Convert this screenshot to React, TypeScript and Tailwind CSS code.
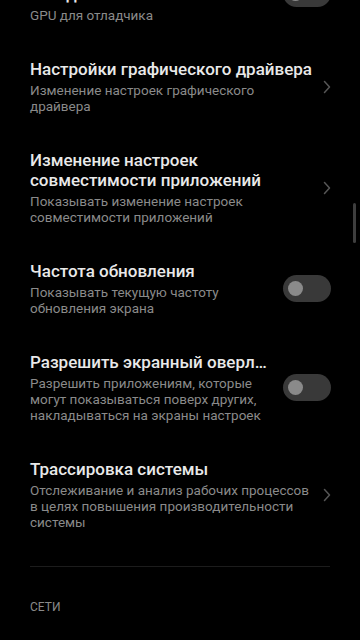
import type { ReactNode } from "react";

type Row = {
  title: string;
  summary: string;
  control: "toggle" | "chevron";
};

const rows: Row[] = [
  {
    title: "Разрешить загрузку слоев отладки",
    summary: "GPU для отладчика",
    control: "toggle",
  },
  {
    title: "Настройки графического драйвера",
    summary: "Изменение настроек графического драйвера",
    control: "chevron",
  },
  {
    title: "Изменение настроек совместимости приложений",
    summary: "Показывать изменение настроек совместимости приложений",
    control: "chevron",
  },
  {
    title: "Частота обновления",
    summary: "Показывать текущую частоту обновления экрана",
    control: "toggle",
  },
  {
    title: "Разрешить экранный оверлей настроек",
    summary:
      "Разрешить приложениям, которые могут показываться поверх других, накладываться на экраны настроек",
    control: "toggle",
  },
  {
    title: "Трассировка системы",
    summary:
      "Отслеживание и анализ рабочих процессов в целях повышения производительности системы",
    control: "chevron",
  },
];

function Toggle() {
  return (
    <div className="flex h-[27px] w-[48px] shrink-0 items-center rounded-full bg-[#393939] pl-[5px]">
      <div className="h-[15px] w-[15px] rounded-full bg-[#8a8a8a]" />
    </div>
  );
}

function Chevron() {
  return (
    <svg
      className="h-[14px] w-[8px] shrink-0"
      viewBox="0 0 8 14"
      fill="none"
      stroke="#565656"
      strokeWidth={1.5}
      strokeLinecap="round"
      strokeLinejoin="round"
    >
      <path d="M1.5 1.5L6.5 7L1.5 12.5" />
    </svg>
  );
}

function SettingRow({ row }: { row: Row }) {
  const isToggle = row.control === "toggle";
  let control: ReactNode = isToggle ? <Toggle /> : <Chevron />;

  return (
    <div className="flex items-center py-[18px] pl-[30px] pr-[29px]">
      <div className={isToggle ? "min-w-0 flex-1 pr-[16px]" : "min-w-0 flex-1 pr-[11px]"}>
        <div
          className={
            row.title.startsWith("Разрешить экранный")
              ? "truncate text-[17px] font-medium leading-[20px] text-[#e9e9e9]"
              : "text-[17px] font-medium leading-[20px] text-[#e9e9e9]"
          }
        >
          {row.title}
        </div>
        <div className="mt-[3px] text-[13.5px] leading-[16px] text-[#8a8a8a]">
          {row.summary}
        </div>
      </div>
      {control}
    </div>
  );
}

export default function App() {
  return (
    <div
      className="relative h-[640px] w-[360px] overflow-hidden bg-black"
      style={{ fontFamily: "Roboto, 'Noto Sans', sans-serif" }}
    >
      <div className="mt-[-54px]">
        {rows.map((row) => (
          <SettingRow key={row.title} row={row} />
        ))}

        {/* divider + next section header */}
        <div className="mx-[30px] mt-[18px] h-px bg-[#1c1c1c]" />
        <div className="px-[30px] pt-[32px] text-[12px] leading-[16px] text-[#8a8a8a]">
          СЕТИ
        </div>
      </div>

      {/* scrollbar */}
      <div className="absolute right-[4px] top-[203px] h-[40px] w-[3px] rounded-full bg-[#3e3e3e]" />
    </div>
  );
}
